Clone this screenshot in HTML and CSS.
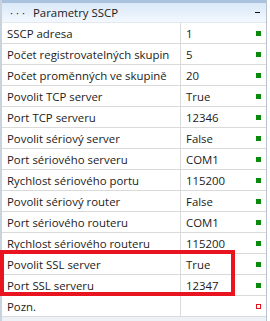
FILE: index.html
```html
<!DOCTYPE html>
<html>
<head>
<meta charset="utf-8">
<link rel="stylesheet" href="styles.css">
</head>
<body>
<div class="panel">
  <div class="topstrip"></div>
  <div class="header">
    <span class="dots">···</span>
    <span class="title">Parametry SSCP</span>
    <span class="collapse"></span>
  </div>
  <div class="grid">
    <div class="row"><div class="name">SSCP adresa</div><div class="val">1</div><div class="mark ok"></div></div>
    <div class="row"><div class="name">Počet registrovatelných skupin</div><div class="val">5</div><div class="mark ok"></div></div>
    <div class="row"><div class="name">Počet proměnných ve skupině</div><div class="val">20</div><div class="mark ok"></div></div>
    <div class="row"><div class="name">Povolit TCP server</div><div class="val">True</div><div class="mark ok"></div></div>
    <div class="row"><div class="name">Port TCP serveru</div><div class="val">12346</div><div class="mark ok"></div></div>
    <div class="row"><div class="name">Povolit sériový server</div><div class="val">False</div><div class="mark ok"></div></div>
    <div class="row"><div class="name">Port sériového serveru</div><div class="val">COM1</div><div class="mark ok"></div></div>
    <div class="row"><div class="name">Rychlost sériového portu</div><div class="val">115200</div><div class="mark ok"></div></div>
    <div class="row"><div class="name">Povolit sériový router</div><div class="val">False</div><div class="mark ok"></div></div>
    <div class="row"><div class="name">Port sériového routeru</div><div class="val">COM1</div><div class="mark ok"></div></div>
    <div class="row"><div class="name">Rychlost sériového routeru</div><div class="val">115200</div><div class="mark ok"></div></div>
    <div class="row"><div class="name">Povolit SSL server</div><div class="val">True</div><div class="mark ok"></div></div>
    <div class="row"><div class="name">Port SSL serveru</div><div class="val">12347</div><div class="mark ok"></div></div>
    <div class="row"><div class="name">Pozn.</div><div class="val"></div><div class="mark empty"></div></div>
  </div>
  <div class="footer"></div>
  <div class="highlight"></div>
</div>
</body>
</html>
```
FILE: styles.css
```css
html, body {
  margin: 0;
  padding: 0;
  background: #ffffff;
}
body {
  font-family: "Open Sans", "Noto Sans", sans-serif;
  font-size: 11.4px;
  color: #1b1b1b;
}
.panel {
  position: relative;
  width: 267px;
  height: 321px;
  border-left: 2px solid #c9d3de;
  border-right: 1px solid #b9c3cd;
  box-sizing: border-box;
  display: flex;
  flex-direction: column;
}
.topstrip {
  height: 3px;
  background: #a9c2dd;
}
.header {
  height: 19px;
  display: flex;
  align-items: center;
  background: linear-gradient(to bottom, #d9e8f8, #f3f8fe);
  border-bottom: 1px solid #e2e8ee;
}
.dots {
  width: 31px;
  padding-left: 8px;
  box-sizing: border-box;
  letter-spacing: 3px;
  color: #333;
}
.title {
  flex: 1;
  color: #1b1b1b;
}
.collapse {
  width: 5px;
  height: 1px;
  background: #111;
  margin-right: 6px;
}
.grid {
  display: flex;
  flex-direction: column;
}
.row {
  height: 21px;
  display: flex;
  align-items: center;
  border-bottom: 1px solid #dadada;
  box-sizing: border-box;
}
.name {
  width: 179px;
  height: 100%;
  padding-left: 5px;
  box-sizing: border-box;
  border-right: 1px solid #dadada;
  display: flex;
  align-items: center;
  white-space: nowrap;
  overflow: hidden;
}
.val {
  flex: 1;
  padding-left: 5px;
}
.mark {
  width: 5px;
  height: 5px;
  margin-right: 5px;
  box-sizing: border-box;
}
.mark.ok {
  background: #0a8a0a;
}
.mark.empty {
  border: 1px solid #e0141c;
}
.footer {
  flex: 1;
  background: #eef1f5;
}
.highlight {
  position: absolute;
  left: -2px;
  top: 250px;
  width: 235px;
  height: 46px;
  border: 4px solid #e8141f;
  box-sizing: border-box;
}
```
